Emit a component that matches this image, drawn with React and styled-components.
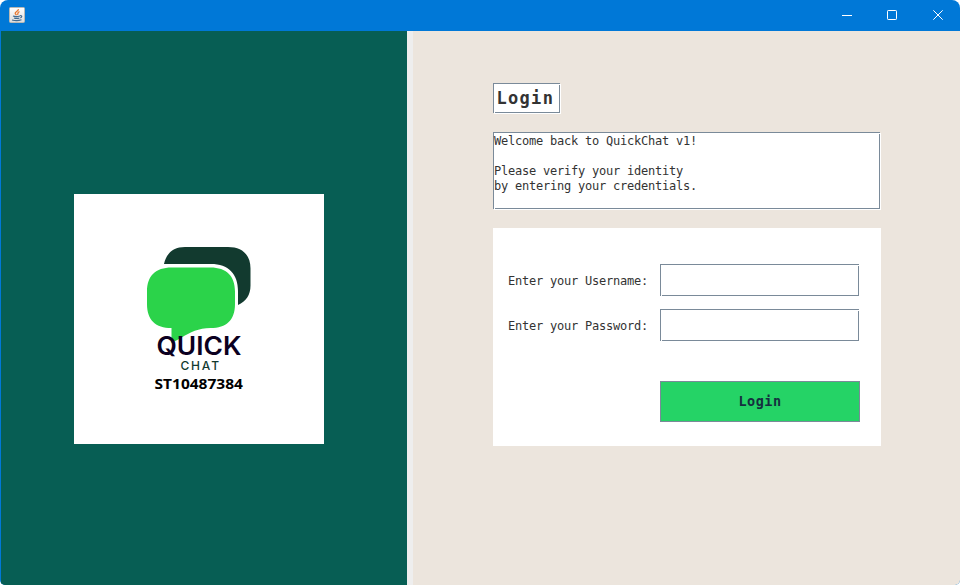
import React from 'react';
import styled, { createGlobalStyle } from 'styled-components';

const GlobalStyle = createGlobalStyle`
  * { box-sizing: border-box; }
  body { margin: 0; background: #fff; overflow: hidden; }
`;

const mono = `'DejaVu Sans Mono', monospace`;

const Window = styled.div`
  width: 960px;
  height: 585px;
  display: flex;
  flex-direction: column;
  background: #0078d7;
  border-radius: 8px 8px 5px 5px;
  overflow: hidden;
`;

const TitleBar = styled.header`
  height: 31px;
  flex: none;
  display: flex;
  align-items: flex-start;
  justify-content: space-between;
  padding-left: 9px;
`;

const AppIcon = styled.svg`
  margin-top: 7px;
`;

const WindowControls = styled.div`
  display: flex;
`;

const ControlButton = styled.button`
  width: ${(p) => p.$width}px;
  height: 30px;
  padding: 0;
  border: 0;
  background: transparent;
  display: grid;
  place-items: center;
`;

const Content = styled.main`
  flex: 1;
  display: flex;
  padding-left: 1px;
`;

const BrandPane = styled.section`
  width: 406px;
  padding: 163px 0 0 73px;
  background: #075e54;
`;

const Divider = styled.div`
  width: 6px;
  background: #eee;
`;

const LoginPane = styled.section`
  flex: 1;
  display: flex;
  flex-direction: column;
  align-items: flex-start;
  padding: 52px 0 0 80px;
  background: #ece5dd;
`;

const LogoSvg = styled.svg`
  display: block;
  background: #fff;
`;

/* Etched frame: a slate line with a white highlight on its lower right side. */
const Etched = styled.div`
  position: relative;
  border: 1px solid #7a8a99;
  background: #fff;
  box-shadow: 1px 1px 0 #fff;

  &::before,
  &::after {
    content: '';
    position: absolute;
    width: 1px;
    height: 1px;
    background: #fff;
  }
  &::before { right: -1px; top: 0; }
  &::after { left: 0; bottom: -1px; }
`;

const Heading = styled(Etched).attrs({ as: 'h1' })`
  width: 67px;
  height: 30px;
  margin: 0 0 19px;
  padding-left: 2.5px;
  font: bold 17px/29px ${mono};
  letter-spacing: 1.3px;
  color: #333;
  white-space: nowrap;
`;

const Message = styled(Etched)`
  width: 387px;
  height: 77px;
  margin-bottom: 19px;
  padding-top: 1px;
  font: 12px/15px ${mono};
  letter-spacing: -0.224px;
  color: #333;
  white-space: pre;
`;

const Form = styled.form`
  width: 388px;
  height: 218px;
  display: grid;
  grid-template-columns: 152px 200px;
  grid-template-rows: 32px 32px 68px;
  row-gap: 13px;
  padding: 36px 0 0 15px;
  background: #fff;
`;

const Label = styled.label`
  font: 12px/35px ${mono};
  letter-spacing: -0.224px;
  color: #333;
`;

const FieldFrame = styled(Etched)`
  width: 199px;
  height: 32px;
`;

const Input = styled.input`
  display: block;
  width: 100%;
  height: 100%;
  border: 0;
  outline: 0;
  background: transparent;
`;

const SubmitButton = styled.button`
  grid-column: 2;
  width: 200px;
  height: 41px;
  margin-top: 27px;
  padding: 0;
  border: 1px solid #7a8a99;
  background: #25d366;
  color: #15303f;
  font: bold 13.500px/39px ${mono};
  letter-spacing: 0.5px;
`;

function JavaIcon() {
  return (
    <AppIcon width="16" height="16" viewBox="0 0 16 16" fill="none">
      <defs>
        <linearGradient id="tile" x1="0" y1="0" x2="0" y2="1">
          <stop offset="0" stopColor="#fff" />
          <stop offset="1" stopColor="#dcdcdc" />
        </linearGradient>
      </defs>
      <rect x="0.5" y="0.5" width="15" height="15" rx="1" fill="url(#tile)" stroke="#b9b9b5" />
      <path d="M9.400 2.200C9.700 4 6 4.800 6.200 6.200c.1.9 1.100 1.200 1.100 2M10.500 4.600C7.700 5.400 9.600 6.500 8.500 7.900" stroke="#e8762d" strokeWidth="1.300" />
      <path d="M4 9c1.500.6 5 .5 7 0M5 11c1.500.5 4 .5 5.400 0M3 13c2.500.7 7.300.6 9.500-.2M11 8.800c2.200-.7 2.400 1.400.3 2" stroke="#416b91" strokeWidth="1.200" />
    </AppIcon>
  );
}

function Logo() {
  return (
    <LogoSvg width="250" height="250" viewBox="0 0 250 250">
      <path d="M90 70C92.500 59 99.500 53 111 53h43c14.500 0 22.500 8 22.500 21.500v17c0 9.500-4.500 16-12.500 19.500V97c0-17-9.500-27-27-27z" fill="#123a2f" />
      <path d="M98 73.500h38.500c16 0 24.500 8.500 24.500 24v12.500c0 16-8.500 24-24.500 24-12 .3-20 4-29.500 10l-9.500 5V134c-16 0-24.500-8-24.500-24V97.500c0-15.500 8.500-24 24.500-24z" fill="#2bd34a" />
      <text x="82.500" y="160.500" fontFamily="Inter, sans-serif" fontWeight="600" fontSize="25" textLength="85" lengthAdjust="spacingAndGlyphs" fill="#0b0020">QUICK</text>
      <text x="106.500" y="176" fontFamily="Inter, sans-serif" fontWeight="500" fontSize="12" textLength="38.500" lengthAdjust="spacing" fill="#123a2f">CHAT</text>
      <text x="80.500" y="194.500" fontFamily="'Noto Sans', sans-serif" fontWeight="700" fontSize="14" textLength="88.500" lengthAdjust="spacingAndGlyphs" fill="#000">ST10487384</text>
    </LogoSvg>
  );
}

export default function App() {
  return (
    <>
      <GlobalStyle />
      <Window>
        <TitleBar>
          <JavaIcon />
          <WindowControls>
            <ControlButton $width={44} aria-label="Minimize">
              <svg width="10" height="10"><path d="M0 5.500h10" stroke="#fff" /></svg>
            </ControlButton>
            <ControlButton $width={46} aria-label="Maximize">
              <svg width="10" height="10"><rect x="0.500" y="0.500" width="9" height="9" rx="0.700" fill="none" stroke="#fff" /></svg>
            </ControlButton>
            <ControlButton $width={45} aria-label="Close">
              <svg width="10" height="10"><path d="M0.300 0.300l9.400 9.400M9.700 0.300L0.300 9.700" stroke="#fff" /></svg>
            </ControlButton>
          </WindowControls>
        </TitleBar>
        <Content>
          <BrandPane><Logo /></BrandPane>
          <Divider />
          <LoginPane>
            <Heading>Login</Heading>
            <Message>{'Welcome back to QuickChat v1!\n\nPlease verify your identity\nby entering your credentials.'}</Message>
            <Form onSubmit={(e) => e.preventDefault()}>
              <Label htmlFor="username">Enter your Username:</Label>
              <FieldFrame><Input id="username" /></FieldFrame>
              <Label htmlFor="password">Enter your Password:</Label>
              <FieldFrame><Input id="password" type="password" /></FieldFrame>
              <SubmitButton type="submit">Login</SubmitButton>
            </Form>
          </LoginPane>
        </Content>
      </Window>
    </>
  );
}
